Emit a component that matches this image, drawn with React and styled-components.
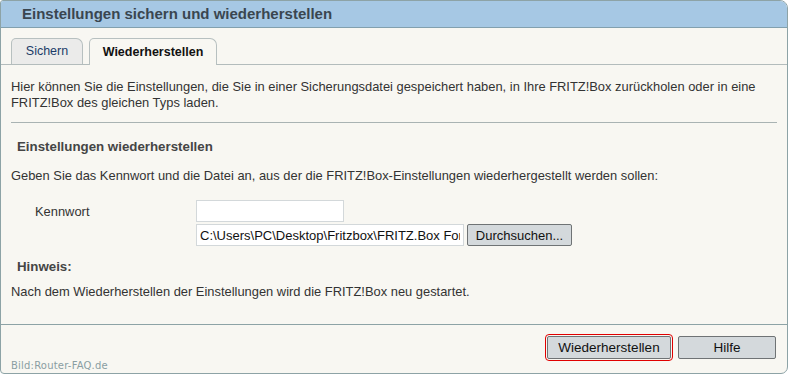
import React from "react";
import styled, { createGlobalStyle, css } from "styled-components";

const Global = createGlobalStyle`
  html, body { margin: 0; padding: 0; background: #ffffff; }
  body { font-family: "Liberation Sans", Arial, sans-serif; }
`;

const Panel = styled.div`
  position: relative;
  box-sizing: border-box;
  width: 788px;
  height: 374px;
  border: 1px solid #8da3a6;
  border-radius: 3px 8px 7px 4px;
  background: #f8f7f2;
  display: flex;
  flex-direction: column;
  overflow: hidden;
  color: #333333;
  font-size: 12.9px;
`;

const Header = styled.div`
  flex: none;
  height: 26px;
  line-height: 26px;
  background: #a6c8e4;
  border-bottom: 1px solid #82a0ae;
  padding-left: 21px;
  font-size: 15px;
  font-weight: bold;
  color: #3a4650;
`;

const TabBar = styled.div`
  flex: none;
  display: flex;
  align-items: flex-end;
  gap: 6px;
  margin-top: 10px;
  padding-left: 10px;
  border-bottom: 1px solid #b3bcbc;
`;

const Tab = styled.div`
  box-sizing: border-box;
  height: 26px;
  line-height: 25px;
  width: ${(p) => p.$w}px;
  text-align: center;
  border: 1px solid #b7c0c0;
  border-bottom: none;
  border-radius: 5px 7px 0 0;
  font-size: 12.5px;
  ${(p) =>
    p.$active
      ? css`
          background: #f8f7f2;
          color: #111111;
          font-weight: bold;
          height: 27px;
          margin-bottom: -1px;
          line-height: 26px;
        `
      : css`
          background: #ebebea;
          color: #1c3c68;
        `}
`;

const Content = styled.div`
  flex: 1;
  padding: 14px 10px 0 10px;
`;

const Text = styled.p`
  margin: 0;
  line-height: 16px;
  font-size: 12.9px;
  color: #333333;
  ${(p) => p.$mt && css`margin-top: ${p.$mt}px;`}
`;

const Rule = styled.hr`
  margin: 11px 0 0 0;
  border: none;
  border-top: 1px solid #a9b3b3;
  height: 0;
`;

const Heading = styled.h3`
  margin: ${(p) => p.$mt}px 0 0 6px;
  font-size: 13.3px;
  line-height: 16px;
  font-weight: bold;
  color: #454545;
`;

const FormGrid = styled.div`
  display: grid;
  grid-template-columns: 161px auto;
  row-gap: 2px;
  margin-top: 16px;
  padding-left: 24px;
  align-items: center;
`;

const Label = styled.span`
  font-size: 12.9px;
  color: #333333;
`;

const FileRow = styled.div`
  display: flex;
  align-items: center;
  gap: 3px;
`;

const Input = styled.input`
  box-sizing: border-box;
  width: ${(p) => p.$w}px;
  height: 22px;
  margin: 0;
  padding: 0 3px;
  border: 1px solid #d3d8da;
  background: #ffffff;
  font-family: "Liberation Sans", Arial, sans-serif;
  font-size: 13px;
  color: #111111;
  outline: none;
`;

const Button = styled.button`
  box-sizing: border-box;
  width: ${(p) => p.$w}px;
  height: ${(p) => p.$h || 22}px;
  margin: 0;
  padding: 0;
  border: 1px solid #6f7375;
  border-radius: 2px;
  background: #d4d9dc;
  font-family: "Liberation Sans", Arial, sans-serif;
  font-size: ${(p) => p.$fs || 13}px;
  color: #111111;
  ${(p) =>
    p.$focus &&
    css`
      outline: 1px solid #e00000;
      outline-offset: 1px;
    `}
`;

const Footer = styled.div`
  flex: none;
  height: 49px;
  border-top: 1px solid #8da3a6;
  display: flex;
  justify-content: flex-end;
  align-items: flex-start;
  gap: 7px;
  padding: 11px 11px 0 0;
  box-sizing: border-box;
`;

const Watermark = styled.div`
  position: absolute;
  left: 10px;
  bottom: 2px;
  font-family: "DejaVu Sans", sans-serif;
  font-size: 10px;
  letter-spacing: 0.2px;
  color: #8a9ea2;
`;

export default function App() {
  return (
    <>
      <Global />
      <Panel>
        <Header>Einstellungen sichern und wiederherstellen</Header>
        <TabBar>
          <Tab $w={72}>Sichern</Tab>
          <Tab $w={128} $active>
            Wiederherstellen
          </Tab>
        </TabBar>
        <Content>
          <Text>
            Hier können Sie die Einstellungen, die Sie in einer Sicherungsdatei gespeichert haben, in Ihre FRITZ!Box
            zurückholen oder in eine FRITZ!Box des gleichen Typs laden.
          </Text>
          <Rule />
          <Heading $mt={16}>Einstellungen wiederherstellen</Heading>
          <Text $mt={13}>
            Geben Sie das Kennwort und die Datei an, aus der die FRITZ!Box-Einstellungen wiederhergestellt werden sollen:
          </Text>
          <FormGrid>
            <Label>Kennwort</Label>
            <Input type="password" $w={148} defaultValue="" />
            <span />
            <FileRow>
              <Input
                type="text"
                readOnly
                $w={268}
                defaultValue="C:\Users\PC\Desktop\Fritzbox\FRITZ.Box Fon WLAN 7390.export"
              />
              <Button $w={105}>Durchsuchen...</Button>
            </FileRow>
          </FormGrid>
          <Heading $mt={13}>Hinweis:</Heading>
          <Text $mt={9}>Nach dem Wiederherstellen der Einstellungen wird die FRITZ!Box neu gestartet.</Text>
        </Content>
        <Footer>
          <Button $w={124} $h={23} $fs={13.5} $focus>
            Wiederherstellen
          </Button>
          <Button $w={98} $h={23} $fs={13.5}>
            Hilfe
          </Button>
        </Footer>
        <Watermark>Bild:Router-FAQ.de</Watermark>
      </Panel>
    </>
  );
}
